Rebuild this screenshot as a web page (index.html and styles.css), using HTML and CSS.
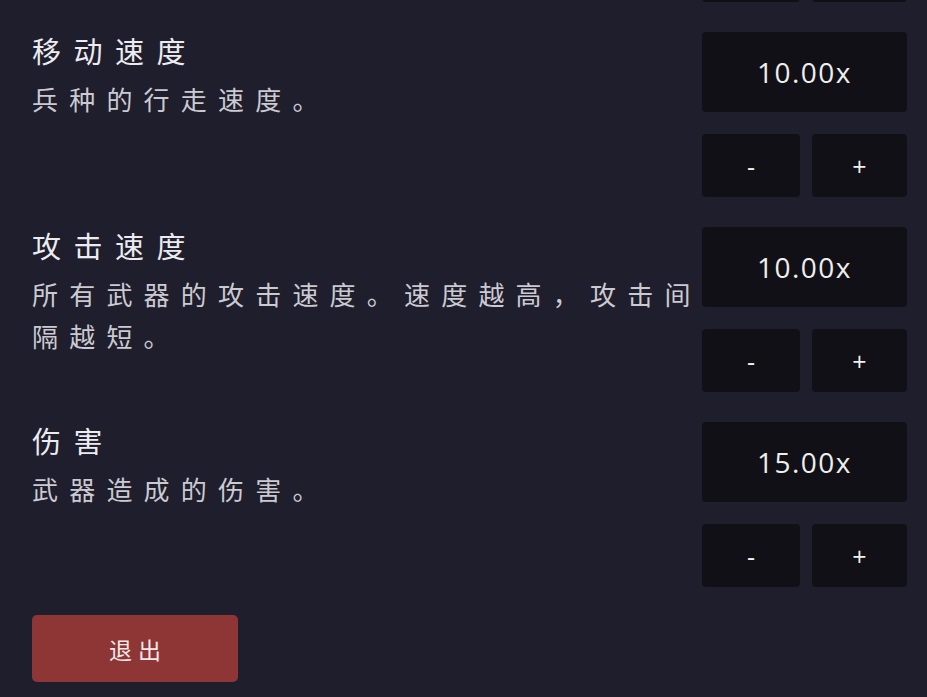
FILE: index.html
```html
<!DOCTYPE html>
<html lang="zh">
<head>
<meta charset="utf-8">
<title>设置</title>
<link rel="stylesheet" href="styles.css">
</head>
<body>
<div class="page">
  <div class="settings">
    <div class="setting setting--clipped">
      <div class="info"></div>
      <div class="control">
        <div class="steppers">
          <button class="step step--minus" aria-label="减少"></button>
          <button class="step step--plus" aria-label="增加"></button>
        </div>
      </div>
    </div>

    <div class="setting">
      <div class="info">
        <div class="title">移动速度</div>
        <div class="desc">兵种的行走速度。</div>
      </div>
      <div class="control">
        <div class="value">10.00x</div>
        <div class="steppers">
          <button class="step step--minus">-</button>
          <button class="step step--plus">+</button>
        </div>
      </div>
    </div>

    <div class="setting">
      <div class="info">
        <div class="title">攻击速度</div>
        <div class="desc">所有武器的攻击速度。速度越高，攻击间隔越短。</div>
      </div>
      <div class="control">
        <div class="value">10.00x</div>
        <div class="steppers">
          <button class="step step--minus">-</button>
          <button class="step step--plus">+</button>
        </div>
      </div>
    </div>

    <div class="setting">
      <div class="info">
        <div class="title">伤害</div>
        <div class="desc">武器造成的伤害。</div>
      </div>
      <div class="control">
        <div class="value">15.00x</div>
        <div class="steppers">
          <button class="step step--minus">-</button>
          <button class="step step--plus">+</button>
        </div>
      </div>
    </div>
  </div>

  <button class="exit">退出</button>
</div>
</body>
</html>
```

FILE: styles.css
```css
html, body {
  margin: 0;
  padding: 0;
  background: #1f1e2c;
  overflow: hidden;
}

body {
  font-family: "Noto Sans CJK SC", "Noto Sans", sans-serif;
  color: #e6e6ea;
}

.page {
  padding: 0 20px 0 32px;
}

.settings {
  display: flex;
  flex-direction: column;
  gap: 30px;
}

.setting {
  display: flex;
  align-items: flex-start;
}

.setting--clipped {
  margin-top: -61px;
}

.info {
  flex: 1;
  min-width: 0;
}

.title {
  font-size: 29px;
  line-height: 36px;
  letter-spacing: 12.5px;
  color: #ececf0;
  white-space: nowrap;
}

.desc {
  margin-top: 10px;
  font-size: 26px;
  line-height: 42px;
  letter-spacing: 11.2px;
  color: #cbcad2;
}

.control {
  width: 205px;
  flex: none;
  display: flex;
  flex-direction: column;
  gap: 22px;
}

.value {
  height: 80px;
  background: #111017;
  border-radius: 4px;
  display: flex;
  align-items: center;
  justify-content: center;
  font-family: "Open Sans", "Noto Sans", sans-serif;
  font-size: 28px;
  letter-spacing: 1.5px;
  color: #eeeeee;
}

.steppers {
  display: flex;
  gap: 12px;
}

.step {
  height: 63px;
  border: none;
  border-radius: 4px;
  background: #111017;
  color: #f0f0f0;
  font-family: "Open Sans", "Noto Sans", sans-serif;
  font-size: 25px;
  padding: 0;
  display: flex;
  align-items: center;
  justify-content: center;
}

.step--minus {
  width: 98px;
}

.step--plus {
  width: 95px;
}

.exit {
  display: flex;
  align-items: center;
  justify-content: center;
  margin-top: 28px;
  width: 206px;
  height: 67px;
  border: none;
  border-radius: 5px;
  background: #8e3636;
  color: #f2e8e8;
  font-family: "Noto Sans CJK SC", sans-serif;
  font-size: 23px;
  letter-spacing: 6px;
  padding: 0 0 0 6px;
}
```
